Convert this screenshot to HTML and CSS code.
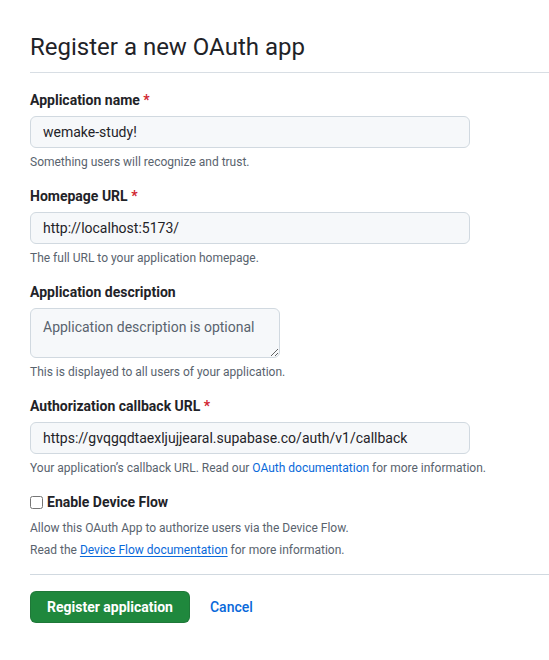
FILE: index.html
```html
<!DOCTYPE html>
<html lang="en">
<head>
<meta charset="utf-8">
<title>Register a new OAuth app</title>
<link rel="stylesheet" href="styles.css">
</head>
<body>
<div class="page">
  <div class="header">
    <h1 class="title">Register a new OAuth app</h1>
  </div>
  <form class="form">
    <div class="field">
      <label class="label" for="name">Application name <span class="req">*</span></label>
      <input class="input" id="name" type="text" value="wemake-study!">
      <p class="note">Something users will recognize and trust.</p>
    </div>
    <div class="field">
      <label class="label" for="home">Homepage URL <span class="req">*</span></label>
      <input class="input" id="home" type="text" value="http://localhost:5173/">
      <p class="note">The full URL to your application homepage.</p>
    </div>
    <div class="field">
      <label class="label" for="desc">Application description</label>
      <textarea class="textarea" id="desc" placeholder="Application description is optional"></textarea>
      <p class="note">This is displayed to all users of your application.</p>
    </div>
    <div class="field field-last">
      <label class="label" for="cb">Authorization callback URL <span class="req">*</span></label>
      <input class="input" id="cb" type="text" value="https://gvqgqdtaexljujjearal.supabase.co/auth/v1/callback">
      <p class="note">Your application’s callback URL. Read our <a class="link" href="#">OAuth documentation</a> for more information.</p>
    </div>
    <div class="check-group">
      <label class="check-label"><input class="checkbox" type="checkbox"> Enable Device Flow</label>
      <p class="note note-first">Allow this OAuth App to authorize users via the Device Flow.</p>
      <p class="note note-second">Read the <a class="link link-under" href="#">Device Flow documentation</a> for more information.</p>
    </div>
    <div class="actions">
      <button class="btn-primary" type="button">Register application</button>
      <a class="cancel" href="#">Cancel</a>
    </div>
  </form>
</div>
</body>
</html>
```

FILE: styles.css
```css
html, body {
  margin: 0;
  padding: 0;
  background: #ffffff;
}
body {
  font-family: "Segoe UI", Roboto, "Liberation Sans", sans-serif;
  color: #1f2328;
  font-size: 14px;
}
.page {
  padding: 29px 0 0 30px;
}
.header {
  padding-bottom: 7px;
  border-bottom: 1px solid #d8dee4;
  margin-bottom: 17px;
}
.title {
  margin: 0;
  font-size: 24px;
  font-weight: 400;
  line-height: 36px;
  color: #1f2328;
}
.form {
  margin: 0;
}
.field {
  margin-bottom: 15px;
}
.field-last {
  margin-bottom: 15px;
}
.label {
  display: block;
  font-size: 14px;
  font-weight: 700;
  line-height: 21px;
  margin-bottom: 5px;
}
.req {
  color: #d1242f;
}
.input {
  display: block;
  width: 440px;
  height: 32px;
  box-sizing: border-box;
  border: 1px solid #d1d9e0;
  border-radius: 6px;
  background: #f6f8fa;
  padding: 0 12px;
  font-family: inherit;
  font-size: 14px;
  color: #1f2328;
  outline: none;
}
.textarea {
  display: block;
  width: 250px;
  height: 50px;
  box-sizing: border-box;
  border: 1px solid #d1d9e0;
  border-radius: 6px;
  background: #f6f8fa;
  padding: 8px 12px;
  font-family: inherit;
  font-size: 14px;
  line-height: 21px;
  color: #1f2328;
  resize: both;
  outline: none;
}
.textarea::placeholder {
  color: #59636e;
}
.note {
  margin: 5px 0 0;
  font-size: 12px;
  line-height: 18px;
  color: #59636e;
}
.link {
  color: #0969da;
  text-decoration: none;
}
.link-under {
  text-decoration: underline;
  text-underline-offset: 2px;
}
.check-group {
  padding-bottom: 15px;
  border-bottom: 1px solid #d1d9e0;
  margin-bottom: 16px;
}
.check-label {
  display: flex;
  align-items: center;
  gap: 4px;
  font-size: 14px;
  font-weight: 700;
  line-height: 21px;
}
.checkbox {
  width: 13px;
  height: 13px;
  margin: 0;
}
.note-first {
  margin-top: 6px;
}
.note-second {
  margin-top: 4px;
}
.actions {
  display: flex;
  align-items: center;
  gap: 20px;
}
.btn-primary {
  height: 32px;
  padding: 0 16px;
  box-sizing: border-box;
  border: 1px solid rgba(31, 35, 40, 0.15);
  border-radius: 6px;
  background: #1f883d;
  color: #ffffff;
  font-family: inherit;
  font-size: 14px;
  font-weight: 700;
}
.cancel {
  color: #0969da;
  text-decoration: none;
  font-size: 14px;
  font-weight: 500;
}
```
